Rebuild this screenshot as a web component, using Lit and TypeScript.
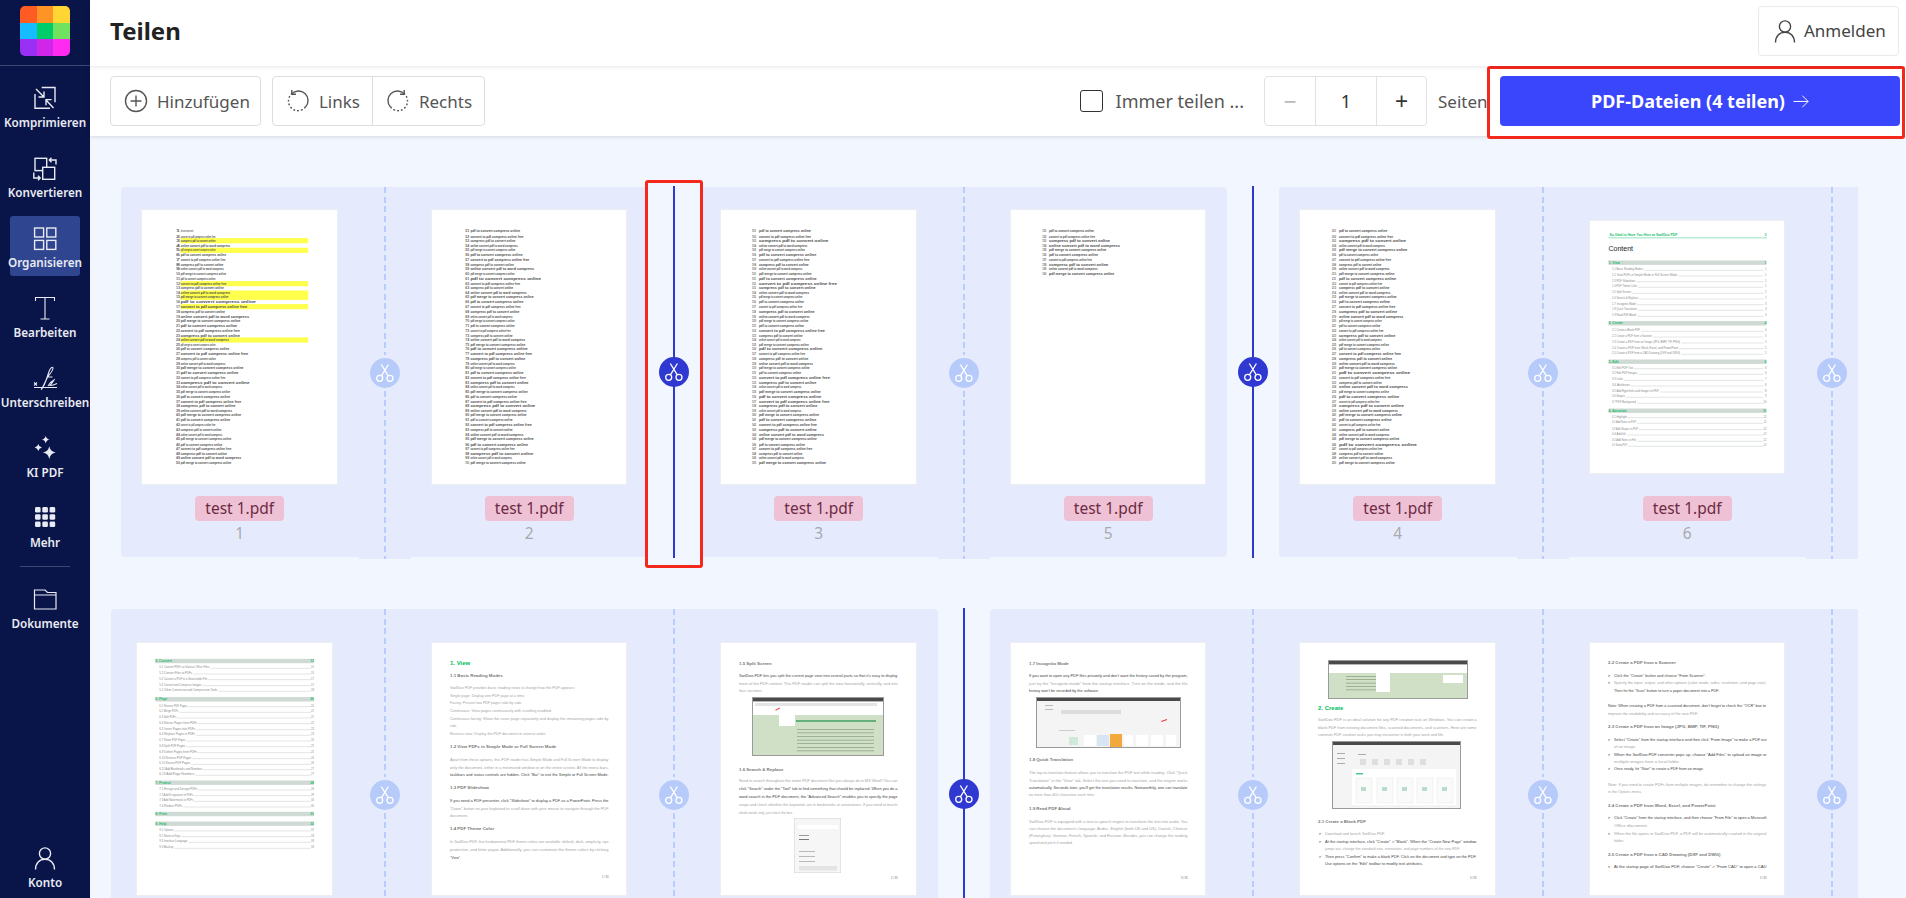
import { LitElement, css, html, svg } from 'lit';
import { customElement } from 'lit/decorators.js';

// y positions of the text rows on the "list" pages, all of them share this rhythm
const LINE_Y = [153, 169, 181, 197, 210, 225, 238, 253, 266, 282, 295, 310, 322, 338, 351, 366, 379, 394, 410, 423, 438, 451, 466, 479, 495, 507, 522, 536, 551, 564, 579, 592, 607, 621, 636, 649, 664, 677, 692, 705, 720, 733, 749, 765, 777, 793, 805, 820, 833, 849].map((y) => (y - 89) / 3);

const PHRASES = [
  'pdf to convert compress online',
  'convert to pdf compress online free',
  'compress pdf to convert online',
  'online convert pdf to word compress',
  'pdf merge to convert compress online',
];

const listPage = (numX: number, textX: number, start: number, widths: number[], marks: number[] = []) => svg`
  ${marks.map((i) => svg`<rect x="${textX}" y="${LINE_Y[i] - 2.6}" width="127.5" height="5.2" fill="#ffff4d"></rect>`)}
  ${widths.map((w, i) => svg`
    <text class="num-t" x="${numX}" y="${LINE_Y[i] + 1}" textLength="4" lengthAdjust="spacingAndGlyphs">${start + i}</text>
    <text class="line-t" x="${textX}" y="${LINE_Y[i] + 1}" textLength="${w}" lengthAdjust="spacingAndGlyphs">${PHRASES[i % PHRASES.length]}</text>`)}
`;

const ends = (list: number[], from: number, k: number) => list.map((e) => (e - from) / k);

type Toc = { y: number; label: string; page: string; head?: boolean; w?: number };

const tocPage = (rows: Toc[], x0: number, x1: number, indent: number) => svg`
  ${rows.map((r) => r.head
    ? svg`
      <rect x="${x0}" y="${r.y - 2.2}" width="${x1 - x0}" height="4.4" fill="#d0dad4"></rect>
      <text class="toc-h" x="${x0}" y="${r.y + 1.1}">${r.label}</text>
      <text class="toc-h" x="${x1}" y="${r.y + 1.1}" text-anchor="end">${r.page}</text>`
    : svg`
      <text class="toc-t" x="${x0 + indent}" y="${r.y + 1}" textLength="${r.w ?? 30}" lengthAdjust="spacingAndGlyphs">${r.label}</text>
      <line x1="${x0 + indent + (r.w ?? 30) + 1}" x2="${x1 - 3}" y1="${r.y + 1}" y2="${r.y + 1}" stroke="#c4c8c6" stroke-width="0.5"></line>
      <text class="toc-t" x="${x1}" y="${r.y + 1}" text-anchor="end">${r.page}</text>`)}
`;

const tocRows = (spec: [string, string, number, boolean?, number?][]): Toc[] =>
  spec.map(([label, page, y, head, w]) => ({ label, page, y, head, w }));

type Block = { k: 'g' | 'h' | 'p' | 'd' | 'f' | 'b'; y: number; t: string; x?: number; w?: number };

// prose pages: heading / body / dark body lines, laid out at the reference's rows
const prose = (blocks: Block[], left = 18, right = 176.5) => svg`
  ${blocks.map((b) => {
    const x = b.x ?? left;
    if (b.k === 'g') return svg`<text class="p-g" x="${x}" y="${b.y + 2}">${b.t}</text>`;
    if (b.k === 'h') return svg`<text class="p-h" x="${x}" y="${b.y + 1.6}">${b.t}</text>`;
    if (b.k === 'f') return svg`<text class="p-f" x="${right}" y="${b.y + 1}" text-anchor="end">${b.t}</text>`;
    const len = b.w ?? right - x;
    return svg`<text class="${b.k === 'd' ? 'p-d' : b.k === 'b' ? 'p-b' : 'p-p'}" x="${x}" y="${b.y + 1}" textLength="${len}" lengthAdjust="spacingAndGlyphs">${b.t}</text>`;
  })}
`;

const greenShot = (x: number, y: number, w: number, h: number, bar: number) => svg`
  <rect x="${x}" y="${y}" width="${w}" height="${h}" fill="#9a9a9a"></rect>
  <rect x="${x + 1}" y="${y + 4}" width="${w - 2}" height="${bar}" fill="#fff"></rect>
  <rect x="${x + 1}" y="${y + 1}" width="${w - 2}" height="3.4" fill="#4a4a4a"></rect>
  <rect x="${x + 1}" y="${y + 4 + bar}" width="${w - 2}" height="${h - bar - 5}" fill="#cfe0c6"></rect>
`;

const greenLines = (x: number, y: number, w: number, n: number, gap: number) => svg`
  ${Array.from({ length: n }, (_, i) => svg`<rect x="${x}" y="${y + i * gap}" width="${w}" height="0.6" fill="#7c9072"></rect>`)}
`;

const greyShot = (x: number, y: number, w: number, h: number) => svg`
  <rect x="${x}" y="${y}" width="${w}" height="${h}" fill="#9a9a9a"></rect>
  <rect x="${x + 1}" y="${y + 4}" width="${w - 2}" height="${h - 5}" fill="#f4f4f4"></rect>
  <rect x="${x + 1}" y="${y + 1}" width="${w - 2}" height="3" fill="#4a4a4a"></rect>
`;

const PAGES: Record<string, unknown> = {
  p1: listPage(34, 38.7, 1, ends([187, 243, 243, 280, 243, 270, 268, 263, 264, 270, 243, 270, 264, 280, 276, 345, 323, 267, 328, 306, 298, 305, 305, 277, 243, 278, 326, 244, 268, 314, 301, 268, 329, 260, 280, 280, 308, 294, 285, 308, 280, 243, 258, 260, 283, 260, 283, 272, 308, 283], 155, 2.529), [2, 4, 11, 13, 14, 16, 23]),
  p2: listPage(33.2, 38.4, 51, ends([1014, 1022, 1002, 1008, 1002, 1020, 1037, 998, 1049, 1000, 1067, 1014, 996, 1030, 1048, 1022, 1015, 1012, 995, 1000, 1000, 990, 995, 1027, 1027, 1033, 1044, 1027, 1000, 1003, 1022, 1028, 1035, 1000, 1033, 1006, 1030, 1052, 1030, 1030, 995, 1043, 995, 1022, 1048, 1034, 1000, 1047, 993, 1028], 888, 2.529)),
  p3: listPage(31, 38, 101, ends([336, 336, 388, 325, 318, 352, 331, 329, 310, 338, 353, 414, 350, 330, 310, 315, 310, 347, 332, 328, 315, 378, 311, 305, 329, 370, 319, 328, 342, 332, 306, 393, 352, 307, 365, 367, 392, 355, 307, 360, 352, 354, 353, 375, 353, 318, 340, 310, 315, 381], 180, 3)),
  p5: listPage(31.3, 38, 151, ends([1185, 1188, 1233, 1263, 1222, 1197, 1179, 1228, 1196, 1246], 1050, 3)),
  p4: listPage(32, 39, 201, ends([417, 430, 459, 412, 462, 397, 426, 404, 422, 433, 437, 406, 422, 424, 438, 423, 435, 439, 453, 405, 402, 409, 435, 405, 421, 401, 448, 428, 434, 439, 468, 424, 405, 463, 421, 444, 400, 454, 441, 450, 427, 402, 422, 422, 444, 483, 406, 408, 428, 434], 310, 2.221)),
  p6: svg`
    <text class="toc-h" x="19.5" y="15">So Glad to Have You Here at SwifDoo PDF</text>
    <text class="toc-h" x="176.5" y="15" text-anchor="end">3</text>
    <rect x="18.5" y="16.2" width="158.5" height="1.2" fill="#a8e6cb"></rect>
    <text class="toc-title" x="18.5" y="30">Content</text>
    ${tocPage(tocRows([
      ['1. View', '1', 41.7, true],
      ['1.1 Basic Reading Modes', '1', 48.3, false, 31], ['1.2 View PDFs in Simple Mode or Full Screen Mode', '1', 54, false, 65], ['1.3 PDF Slideshow', '1', 59.7, false, 23], ['1.4 PDF Theme Color', '1', 65.3, false, 25], ['1.5 Split Screen', '2', 71.3, false, 19], ['1.6 Search & Replace', '2', 77, false, 26], ['1.7 Incognito Mode', '3', 82.7, false, 24], ['1.8 Quick Translation', '3', 88.3, false, 25], ['1.9 Read PDF Aloud', '3', 94.3, false, 24],
      ['2. Create', '4', 102.3, true],
      ['2.1 Create a Blank PDF', '4', 109.3, false, 28], ['2.2 Create a PDF from a Scanner', '5', 115, false, 40], ['2.3 Create a PDF from an Image (JPG, BMP, TIF, PNG)', '5', 121, false, 68], ['2.4 Create a PDF from Word, Excel, and PowerPoint', '5', 126.7, false, 66], ['2.5 Create a PDF from a CAD Drawing (DXF and DWG)', '5', 132.3, false, 68],
      ['3. Edit', '6', 140.7, true],
      ['3.1 Edit PDF Text', '6', 146.7, false, 21], ['3.2 Edit PDF Images', '6', 152.3, false, 25], ['3.3 Links', '7', 158.3, false, 11], ['3.4 Attributes', '8', 164, false, 18], ['3.5 Add Hyperlinks and Images to PDF', '8', 170, false, 47], ['3.6 Shapes', '9', 175.3, false, 13], ['3.7 PDF Background', '10', 181.3, false, 24],
      ['4. Annotate', '11', 189.7, true],
      ['4.1 Highlight', '11', 195.7, false, 15], ['4.2 Add Notes to PDF', '11', 201.3, false, 24], ['4.3 Add Shapes to PDF', '12', 207.7, false, 26], ['4.4 Add Ink', '12', 213, false, 14], ['4.5 Add Notes to File', '12', 219.3, false, 24], ['4.6 Stamp PDF', '12', 224.3, false, 15],
    ]), 18.5, 176.5, 3.5)}
  `,
  toc2: tocPage(tocRows([
    ['5. Convert', '13', 18, true],
    ['5.1 Convert PDFs to Various Office Files', '15', 24.3, false, 50], ['5.2 Convert Files to PDFs', '15', 30, false, 33], ['5.3 Convert a PDF to a Searchable File', '17', 35.7, false, 48], ['5.4 Convert and Compress Images', '17', 41.7, false, 42], ['5.5 Other Conversion and Compression Tools', '18', 47.3, false, 58],
    ['6. Page', '20', 56.3, true],
    ['6.1 Reverse PDF Pages', '20', 62.7, false, 28], ['6.2 Merge PDFs', '21', 68.3, false, 19], ['6.3 Split PDFs', '21', 74, false, 17], ['6.4 Extract Pages from PDFs', '22', 79.7, false, 38], ['6.5 Insert Pages into PDFs', '23', 85.7, false, 36], ['6.6 Replace Pages in PDFs', '23', 91.3, false, 36], ['6.7 Rotate PDF Pages', '24', 97, false, 26], ['6.8 Split PDF Pages', '25', 102.7, false, 26], ['6.9 Delete Pages from PDFs', '25', 108.7, false, 38], ['6.10 Reverse PDF Pages', '26', 114.7, false, 32], ['6.11 Resize PDF Pages', '26', 120.3, false, 31], ['6.12 Add Bookmarks and Numbers', '27', 125.7, false, 43], ['6.13 Add Page Numbers', '27', 131.3, false, 35],
    ['7. Protect', '28', 139.7, true],
    ['7.1 Encrypt and Decrypt PDFs', '28', 146, false, 38], ['7.2 Add E-signature to PDFs', '29', 151.7, false, 34], ['7.3 Add Watermarks to PDFs', '30', 157.3, false, 34], ['7.4 Redact PDFs', '30', 163, false, 23],
    ['8. Print', '31', 171, true],
    ['9. Help', '32', 180.7, true],
    ['9.1 Options', '32', 187, false, 14], ['9.2 Shortcut Keys', '33', 192.7, false, 21], ['9.3 Interface Language', '33', 198.3, false, 28], ['9.4 Backup', '33', 204.3, false, 14],
  ]), 18.3, 177, 4),
  view: prose([
    { k: 'g', y: 20, t: '1. View' },
    { k: 'h', y: 32, t: '1.1 Basic Reading Modes' },
    { k: 'p', y: 45, w: 125, t: 'SwifDoo PDF provides basic reading views to change how the PDF appears:' },
    { k: 'p', y: 52.7, w: 75, t: 'Single page: Display one PDF page at a time.' },
    { k: 'p', y: 60.3, w: 72, t: 'Facing: Present two PDF pages side by side.' },
    { k: 'p', y: 68, w: 102, t: 'Continuous: View pages continuously with scrolling enabled.' },
    { k: 'p', y: 75.7, t: 'Continuous facing: Show the cover page separately and display the remaining pages side by' },
    { k: 'p', y: 83.3, w: 7, t: 'side.' },
    { k: 'p', y: 91, w: 96, t: 'Reverse view: Display the PDF document in reverse order.' },
    { k: 'h', y: 103, t: '1.2 View PDFs in Simple Mode or Full Screen Mode' },
    { k: 'p', y: 117, t: 'Apart from these options, this PDF reader has Simple Mode and Full Screen Mode to display' },
    { k: 'p', y: 124.7, t: 'only the document, either in a minimized window or on the entire screen. All the menu bars,' },
    { k: 'd', y: 132, t: 'taskbars and status controls are hidden. Click "Bar" to exit the Simple or Full Screen Mode.' },
    { k: 'h', y: 144.3, t: '1.3 PDF Slideshow' },
    { k: 'd', y: 158, t: 'If you need a PDF presenter, click "Slideshow" to display a PDF as a PowerPoint. Press the' },
    { k: 'p', y: 165.7, t: '"Down" button on your keyboard or scroll down with your mouse to navigate through the PDF' },
    { k: 'p', y: 173.3, w: 18, t: 'document.' },
    { k: 'h', y: 185.3, t: '1.4 PDF Theme Color' },
    { k: 'p', y: 199, t: 'In SwifDoo PDF, five fundamental PDF theme colors are available: default, dark, simplicity, eye' },
    { k: 'p', y: 207, t: 'protection, and letter paper. Additionally, you can customize the theme colors by clicking' },
    { k: 'd', y: 214.7, w: 11, t: '"View".' },
    { k: 'f', y: 234, t: '1 / 33' },
  ]),
  split: svg`
    ${prose([
      { k: 'h', y: 20, t: '1.5 Split Screen' },
      { k: 'd', y: 33, t: 'SwifDoo PDF lets you split the current page view into several parts so that it\'s easy to display' },
      { k: 'p', y: 41, t: 'more of the PDF content. This PDF reader can split the view horizontally, vertically, and into' },
      { k: 'p', y: 48, w: 24, t: 'four sections.' },
      { k: 'h', y: 126, t: '1.6 Search & Replace' },
      { k: 'p', y: 138, t: 'Need to search throughout the entire PDF document like you always do in MS Word? You can' },
      { k: 'd', y: 146, t: 'click "Search" under the "Tool" tab to find something that should be replaced. When you do a' },
      { k: 'd', y: 154, t: 'word search in the PDF document, the "Advanced Search" enables you to specify the page' },
      { k: 'p', y: 162, t: 'range and check whether the keywords are in bookmarks or annotations. If you need to match' },
      { k: 'p', y: 170, w: 54, t: 'whole words only, just check the box.' },
      { k: 'f', y: 235, t: '2 / 33' },
    ])}
    ${greenShot(31, 54, 132, 59, 14)}
    <rect x="34" y="60" width="122" height="3" fill="#e4e4e4"></rect>
    <rect x="58" y="69" width="16" height="14" fill="#fff"></rect>
    <rect x="54" y="66" width="5" height="1" fill="#f03030" transform="rotate(-30 56 66)"></rect>
    <rect x="75" y="77" width="80" height="2" fill="#62b07c"></rect>
    ${greenLines(76, 86, 77, 7, 3.6)}
    <rect x="73" y="175" width="47" height="55" fill="#d0d0d0"></rect>
    <rect x="73.5" y="175.5" width="46" height="54" fill="#f6f6f6"></rect>
    <rect x="77" y="182" width="40" height="4" fill="#fff"></rect>
    <rect x="78" y="192" width="10" height="1" fill="#999"></rect>
    <rect x="78" y="196" width="10" height="1" fill="#777"></rect>
    <rect x="78" y="208" width="16" height="0.8" fill="#aaa"></rect>
    <rect x="78" y="213" width="16" height="0.8" fill="#aaa"></rect>
    <rect x="78" y="218" width="16" height="0.8" fill="#aaa"></rect>
    <rect x="78" y="223" width="38" height="4.5" fill="#e4e4e4"></rect>
  `,
  incognito: svg`
    ${prose([
      { k: 'h', y: 20, t: '1.7 Incognito Mode' },
      { k: 'd', y: 33, t: 'If you want to open any PDF files privately and don\'t want the history saved by the program,' },
      { k: 'p', y: 41, t: 'just try the "Incognito mode" from the startup interface. Turn on the mode, and the file' },
      { k: 'd', y: 48, w: 70, t: 'history won\'t be recorded by the software.' },
      { k: 'h', y: 116, t: '1.8 Quick Translation' },
      { k: 'p', y: 130, t: 'The top-to-translate feature allows you to translate the PDF text while reading. Click "Quick' },
      { k: 'p', y: 138, t: 'Translation" in the "View" tab. Select the text you need to translate, and the engine works' },
      { k: 'd', y: 145, t: 'automatically. Seconds later, you\'ll get the translation results. Noteworthily, one can translate' },
      { k: 'p', y: 152, w: 66, t: 'no more than 400 characters each time.' },
      { k: 'h', y: 165, t: '1.9 Read PDF Aloud' },
      { k: 'p', y: 179, t: 'SwifDoo PDF is equipped with a text-to-speech engine to transform the text into audio. You' },
      { k: 'p', y: 186, t: 'can choose the document\'s language: Arabic, English (both UK and US), Danish, Chinese' },
      { k: 'p', y: 193, t: '(Putonghua), German, French, Spanish, and Russian. Besides, you can change the reading' },
      { k: 'p', y: 200, w: 44, t: 'speed and pitch if needed.' },
      { k: 'f', y: 235, t: '3 / 33' },
    ])}
    ${greyShot(25, 54, 145, 51)}
    <rect x="34" y="62" width="8" height="1" fill="#bbb"></rect>
    <rect x="34" y="66" width="8" height="1" fill="#bbb"></rect>
    <rect x="50" y="67" width="60" height="4" fill="#dcdcdc"></rect>
    <rect x="48" y="87" width="16" height="1" fill="#ccc"></rect>
    <rect x="58" y="94" width="9" height="8" fill="#cfead9"></rect>
    <rect x="73" y="92" width="12" height="11" fill="#fff"></rect>
    <rect x="86" y="92" width="12" height="11" fill="#d8e6f4"></rect>
    <rect x="99" y="91" width="12" height="13" fill="#f0a93a"></rect>
    <rect x="113" y="92" width="9" height="11" fill="#fff"></rect>
    <rect x="125" y="92" width="12" height="11" fill="#fff"></rect>
    <rect x="140" y="92" width="12" height="11" fill="#fff"></rect>
    <rect x="155" y="92" width="10" height="11" fill="#fff"></rect>
    <rect x="150" y="77" width="6" height="1" fill="#f03030" transform="rotate(-20 153 77)"></rect>
  `,
  create: svg`
    ${prose([
      { k: 'g', y: 65, t: '2. Create' },
      { k: 'p', y: 77, t: 'SwifDoo PDF is an ideal solution for any PDF creation task on Windows. You can create a' },
      { k: 'p', y: 85, t: 'blank PDF from existing document files, scanned documents, and scanners. Here are some' },
      { k: 'p', y: 92, w: 126, t: 'common PDF creation tasks you may encounter in both your work and life.' },
      { k: 'h', y: 178, t: '2.1 Create a Blank PDF' },
      { k: 'p', y: 191, x: 25, w: 60, t: 'Download and launch SwifDoo PDF.' },
      { k: 'd', y: 199, x: 25, t: 'At the startup interface, click "Create" > "Blank". When the "Create New Page" window' },
      { k: 'p', y: 206, x: 25, w: 135, t: 'jumps out, change the standard size, orientation, and page numbers of the new PDF.' },
      { k: 'd', y: 214, x: 25, t: 'Then press "Confirm" to make a blank PDF. Click on the document and type on the PDF.' },
      { k: 'd', y: 221, x: 25, w: 98, t: 'Use options on the "Edit" toolbar to modify text attributes.' },
      { k: 'b', y: 191, x: 19, w: 2, t: '>' },
      { k: 'b', y: 199, x: 19, w: 2, t: '>' },
      { k: 'b', y: 214, x: 19, w: 2, t: '>' },
      { k: 'f', y: 235, t: '4 / 33' },
    ])}
    ${greenShot(28, 17, 140, 39, 9)}
    <rect x="76" y="28" width="14" height="21" fill="#fff"></rect>
    <rect x="143" y="32" width="20" height="8" fill="#fff"></rect>
    ${greenLines(46, 33, 30, 5, 3.4)}
    ${greyShot(32, 98, 129, 68)}
    <rect x="58" y="111" width="8" height="1" fill="#aaa"></rect>
    <rect x="37" y="110" width="8" height="1" fill="#aaa"></rect>
    <rect x="37" y="115" width="8" height="1" fill="#aaa"></rect>
    <rect x="37" y="120" width="8" height="1" fill="#aaa"></rect>
    ${[60, 72, 84, 96, 108, 120].map((x) => svg`<rect x="${x}" y="116" width="6" height="6" fill="#dedede"></rect>`)}
    <rect x="52" y="126" width="104" height="36" fill="#fff"></rect>
    <rect x="56" y="130" width="7" height="1.5" fill="#4cc98a"></rect>
    ${[56, 77, 97, 117, 137].map((x) => svg`
      <rect x="${x}" y="135" width="16" height="25" fill="#fafafa" stroke="#e6e6e6" stroke-width="0.5"></rect>
      <rect x="${x + 5}" y="144" width="5" height="4" fill="#b9dccb"></rect>`)}
  `,
  scanner: prose([
    { k: 'h', y: 19.7, t: '2.2 Create a PDF from a Scanner' },
    { k: 'b', y: 32.7, x: 18, w: 2, t: '>' },
    { k: 'd', y: 32.7, x: 24, w: 92, t: 'Click the "Create" button and choose "From Scanner".' },
    { k: 'b', y: 40, x: 18, w: 2, t: '>' },
    { k: 'p', y: 40, x: 24, t: 'Specify the input, output, and other options (color mode, sides, resolution, and page size).' },
    { k: 'd', y: 47.7, x: 24, w: 105, t: 'Then hit the "Scan" button to turn a paper document into a PDF.' },
    { k: 'd', y: 63, w: 158, t: 'Note: When creating a PDF from a scanned document, don\'t forget to check the "OCR" box to' },
    { k: 'p', y: 70.7, w: 90, t: 'improve the readability and accuracy of the new PDF.' },
    { k: 'h', y: 83, t: '2.3 Create a PDF from an Image (JPG, BMP, TIF, PNG)' },
    { k: 'b', y: 96.7, x: 18, w: 2, t: '>' },
    { k: 'd', y: 96.7, x: 24, t: 'Select "Create" from the startup interface and then click "From Image" to make a PDF out' },
    { k: 'p', y: 104.3, x: 24, w: 22, t: 'of an image.' },
    { k: 'b', y: 112, x: 18, w: 2, t: '>' },
    { k: 'd', y: 112, x: 24, t: 'When the SwifDoo PDF converter pops up, choose "Add Files" to upload an image or' },
    { k: 'p', y: 118.7, x: 24, w: 66, t: 'multiple images from a local folder.' },
    { k: 'b', y: 126.3, x: 18, w: 2, t: '>' },
    { k: 'd', y: 126.3, x: 24, w: 90, t: 'Once ready, hit "Start" to create a PDF from an image.' },
    { k: 'p', y: 141.7, t: 'Note: If you need to create PDFs from multiple images, do remember to change the settings' },
    { k: 'p', y: 149.3, w: 34, t: 'in the Options menu.' },
    { k: 'h', y: 162.3, t: '2.4 Create a PDF from Word, Excel, and PowerPoint' },
    { k: 'b', y: 175, x: 18, w: 2, t: '>' },
    { k: 'd', y: 175, x: 24, t: 'Click "Create" from the startup interface, and then choose "From File" to open a Microsoft' },
    { k: 'p', y: 183, x: 24, w: 34, t: 'Office document.' },
    { k: 'b', y: 190.7, x: 18, w: 2, t: '>' },
    { k: 'p', y: 190.7, x: 24, t: 'When the file opens in SwifDoo PDF, a PDF will be automatically created in the original' },
    { k: 'p', y: 198.3, x: 24, w: 10, t: 'folder.' },
    { k: 'h', y: 211.3, t: '2.5 Create a PDF from a CAD Drawing (DXF and DWG)' },
    { k: 'b', y: 224, x: 18, w: 2, t: '>' },
    { k: 'd', y: 224, x: 24, t: 'At the startup page of SwifDoo PDF, choose "Create" > "From CAD" to open a CAD' },
    { k: 'f', y: 235, t: '5 / 33' },
  ]),
};

type Cell = { art: string; w: number; h: number; num: number; split?: boolean };

const ROW_ONE: Cell[] = [
  { art: 'p1', w: 195, h: 274, num: 1 },
  { art: 'p2', w: 194, h: 274, num: 2, split: true },
  { art: 'p3', w: 195, h: 274, num: 3 },
  { art: 'p5', w: 194, h: 274, num: 5, split: true },
  { art: 'p4', w: 195, h: 274, num: 4 },
  { art: 'p6', w: 194, h: 252, num: 6 },
];

const ROW_TWO: Cell[] = [
  { art: 'toc2', w: 195, h: 252, num: 7 },
  { art: 'view', w: 194, h: 252, num: 8 },
  { art: 'split', w: 195, h: 252, num: 9, split: true },
  { art: 'incognito', w: 194, h: 252, num: 10 },
  { art: 'create', w: 195, h: 252, num: 11 },
  { art: 'scanner', w: 194, h: 252, num: 12 },
];

const icon = (body: unknown) => html`<svg class="ico" viewBox="0 0 24 24" width="24" height="24" fill="none" stroke="currentColor" stroke-width="1.4">${body}</svg>`;

const star = (x: number, y: number, r: number) => {
  const k = r * 0.16;
  return `M${x} ${y - r}Q${x + k} ${y - k} ${x + r} ${y}Q${x + k} ${y + k} ${x} ${y + r}Q${x - k} ${y + k} ${x - r} ${y}Q${x - k} ${y - k} ${x} ${y - r}Z`;
};

const personPath = svg`<circle cx="12" cy="7.5" r="5.6"></circle><path d="M2.5 23.5C2.5 17 6.5 13.2 12 13.2S21.5 17 21.5 23.5"></path>`;

const NAV = [
  { label: 'Komprimieren', body: svg`<path d="M8.7 1.5H22V16.3M2 8V22.3H17M3 3l8 8M11 5.5V11H5.5M20.5 22L13 14M13 19.2V13.6H18.6"></path>` },
  { label: 'Konvertieren', body: svg`<rect x="2" y="2.3" width="11.7" height="12.3"></rect><rect x="9.7" y="11.3" width="12" height="12" fill="#091448"></rect><path d="M23 8.5V4H16.5M18.5 1.8L16.3 4L18.5 6.2M.8 16.5V22H7M5 19.8L7.2 22L5 24.2"></path>` },
  { label: 'Organisieren', active: true, body: svg`<rect x="1.6" y="2" width="9" height="9"></rect><rect x="13.8" y="2" width="9" height="9"></rect><rect x="1.6" y="14.4" width="9" height="9"></rect><rect x="13.8" y="14.4" width="9" height="9"></rect>` },
  { label: 'Bearbeiten', body: svg`<path stroke-width="1.1" d="M2.5 5V1.5H21.5V5M12 1.5V23M7.5 23H16.5"></path>` },
  { label: 'Unterschreiben', body: svg`<path stroke-width="1.1" d="M1 16.5l3 3M4 16.5l-3 3M1 21.5H24M8 23.5C12 20 14 11 16 5.5C17 2.5 19.5 0 20 2C20.5 4 17 8 14.5 11H19.5M14.5 11C13 15 10 20 8.5 23.5M15 20C17 16 19 15 21 14C20 16 18 18 17 19.5C19 19.5 22 18.5 24 17.5"></path>` },
  { label: 'KI PDF', body: svg`<path fill="currentColor" stroke="none" d="${star(16.3, 16.6, 6.4) + star(12.7, 3.6, 3.9) + star(5.3, 11.5, 3.6)}"></path>` },
  { label: 'Mehr', body: svg`${[2, 9.3, 16.6].map((x) => [1, 8.2, 15.5].map((y) => svg`<rect x="${x}" y="${y}" width="5.6" height="5.6" rx="1.4" fill="currentColor" stroke="none"></rect>`))}` },
];

const scissors = svg`<svg viewBox="0 0 30 30" width="30" height="30" fill="none" stroke="#fff" stroke-width="1.3"><circle cx="9.7" cy="20.3" r="3"></circle><circle cx="20" cy="20.3" r="3"></circle><path d="M11.3 6.5L18.3 17.8M18.4 6.5L11.4 17.8"></path></svg>`;

@customElement('app-root')
export class AppRoot extends LitElement {
  static styles = css`
    :host {
      display: flex;
      height: 100vh;
      overflow: hidden;
      background: #f2f6ff;
      font-family: 'Noto Sans', 'Open Sans', sans-serif;
      color: #555;
    }

    .side {
      flex: 0 0 90px;
      min-width: 0;
      display: flex;
      flex-direction: column;
      background: #091448;
      color: #e9ebf3;
      box-sizing: border-box;
      padding-bottom: 2px;
    }
    .logo-wrap {
      height: 66px;
      box-sizing: border-box;
      padding: 6px 20px 0;
      border-bottom: 1px solid #3b4673;
      margin-bottom: 10px;
    }
    .logo {
      width: 50px;
      height: 50px;
      display: grid;
      grid-template-columns: repeat(3, 1fr);
      border-radius: 5px;
      overflow: hidden;
    }
    .nav {
      height: 60px;
      width: 70px;
      margin: 0 10px 10px;
      box-sizing: border-box;
      padding-top: 10px;
      display: flex;
      flex-direction: column;
      align-items: center;
      border-radius: 3px;
      font-size: 11.7px;
      font-weight: 600;
      line-height: 16px;
      white-space: nowrap;
    }
    .nav.active { background: #2f4590; }
    .nav span { margin-top: 4px; }
    .nav.bottom { margin-top: auto; margin-bottom: 0; }
    .rule { height: 1px; margin: 0 20px 10px; background: #3b4673; }
    .ico { display: block; flex: none; overflow: visible; }

    .work { flex: 1; min-width: 0; display: flex; flex-direction: column; }

    .top {
      height: 66px;
      flex: none;
      box-sizing: border-box;
      display: flex;
      align-items: center;
      justify-content: space-between;
      padding: 0 7px 5px 20px;
      background: #fff;
      box-shadow: 0 1px 4px rgba(0, 0, 0, 0.1);
      position: relative;
      z-index: 2;
    }
    h1 { margin: 0; font-size: 24px; font-weight: 700; color: #222; }
    .login {
      height: 50px;
      width: 141px;
      box-sizing: border-box;
      display: flex;
      align-items: center;
      gap: 7px;
      padding-left: 14px;
      border: 1px solid #eaeaea;
      border-radius: 4px;
      font-size: 17px;
      color: #444;
    }

    .tools {
      height: 70px;
      flex: none;
      box-sizing: border-box;
      display: flex;
      align-items: center;
      padding: 0 6px 0 20px;
      background: #fff;
      box-shadow: 0 1px 4px rgba(0, 0, 0, 0.12);
      position: relative;
      z-index: 1;
      font-size: 17px;
    }
    .btn-box {
      height: 50px;
      box-sizing: border-box;
      display: flex;
      border: 1px solid #ddd;
      border-radius: 4px;
    }
    .btn {
      display: flex;
      align-items: center;
      gap: 9px;
      padding: 0 10px 0 13px;
    }
    .btn + .btn { border-left: 1px solid #ddd; }
    .turn .btn { padding-right: 12px; }
    .add { margin-right: 11px; }
    .grow { flex: 1; }
    .check {
      width: 23px;
      height: 22px;
      box-sizing: border-box;
      border: 1.5px solid #333;
      border-radius: 3px;
      margin-right: 13px;
    }
    .always { font-size: 18px; }
    .stepper {
      margin: 0 11px 0 20px;
      width: 163px;
      border-color: #e2e2e2;
    }
    .stepper div {
      display: flex;
      align-items: center;
      justify-content: center;
      font-size: 18px;
      color: #333;
    }
    .stepper div + div { border-left: 1px solid #e2e2e2; }
    .stepper .minus { width: 50px; color: #bbb; font-size: 23px; }
    .stepper .val { width: 60px; }
    .stepper .plus { flex: 1; font-size: 23px; }
    .seiten { width: 49px; overflow: hidden; white-space: nowrap; }
    .go-wrap { position: relative; margin-left: 13px; }
    .go-wrap::after {
      content: '';
      position: absolute;
      left: -13px;
      right: -5px;
      top: -10px;
      bottom: -13px;
      border: 3px solid #f5281d;
      border-radius: 3px;
      pointer-events: none;
    }
    .go {
      width: 400px;
      height: 50px;
      display: flex;
      align-items: center;
      justify-content: center;
      gap: 8px;
      background: #3a46fb;
      border-radius: 4px;
      color: #fff;
      font-size: 18px;
      font-weight: 700;
    }

    .pages { flex: 1; min-height: 0; overflow: hidden; padding-top: 51px; }
    .row { display: flex; margin: 0 0 50px 31px; }
    .row.second { margin-left: 21px; }
    .cell {
      flex: 0 0 237.5px;
      height: 370px;
      box-sizing: border-box;
      padding-top: 23px;
      display: flex;
      flex-direction: column;
      align-items: center;
      background: #e5ebfd;
    }
    .cell.wide { flex-basis: 247.5px; }
    .cell.start { border-radius: 4px 0 0 4px; }
    .cell.end { border-radius: 0 4px 4px 0; }
    .slot { height: 274px; display: flex; align-items: center; }
    .page { background: #fff; box-shadow: 0 0 0 1px #eceef2; }
    .page svg { display: block; }
    .pill {
      margin-top: 12px;
      height: 25px;
      padding: 0 10px;
      border-radius: 4px;
      background: #eec2d4;
      color: #6d2a45;
      font-size: 15.5px;
      line-height: 25px;
    }
    .num { font-size: 15.5px; line-height: 25px; color: #a9a9ad; }

    .sep {
      flex: 0 0 52px;
      height: 372px;
      position: relative;
      display: flex;
      align-items: center;
      justify-content: center;
      background: repeating-linear-gradient(#b8ccff 0 6px, transparent 6px 9.7px) no-repeat center / 2px 100%, #e5ebfd;
    }
    .sep.cut { background: linear-gradient(#2f38d0, #2f38d0) no-repeat center / 2px 100%; margin-top: -1px; }
    .snip {
      width: 30px;
      height: 30px;
      border-radius: 50%;
      background: #b7cbfb;
      box-shadow: 0 0 0 3px #e5ebfd;
    }
    .cut .snip { background: #2f38d0; box-shadow: none; }
    .snip svg { display: block; }
    .sep.marked::after {
      content: '';
      position: absolute;
      left: -3px;
      right: -3px;
      top: -6px;
      bottom: -10px;
      border: 3px solid #f5281d;
      border-radius: 3px;
    }

    text { font-family: 'Liberation Sans', Arial, sans-serif; }
    .line-t { font-size: 2.6px; font-weight: 700; fill: #4a4a4a; }
    .num-t { font-size: 2.6px; font-weight: 700; fill: #666; }
    .toc-h { font-size: 3.4px; font-weight: 700; fill: #18c06c; }
    .toc-t { font-size: 2.7px; fill: #8a8a8a; }
    .toc-title { font-size: 7px; fill: #222; }
    .p-g { font-size: 6px; font-weight: 700; fill: #00c060; }
    .p-h { font-size: 4.4px; font-weight: 700; fill: #777; }
    .p-p { font-size: 3px; fill: #a4a4a4; }
    .p-d { font-size: 3px; fill: #444; }
    .p-b { font-size: 3px; font-weight: 700; fill: #555; }
    .p-f { font-size: 2.6px; fill: #666; }
  `;

  private renderRow(cells: Cell[], second = false) {
    return html`<div class="row ${second ? 'second' : ''}">
      ${cells.map((c, i) => {
        const start = i === 0 || cells[i - 1].split;
        const cls = [start ? 'start' : '', c.split ? 'end' : '', second && i === 0 ? 'wide' : ''].join(' ');
        return html`
          <div class="cell ${cls}">
            <div class="slot">
              <div class="page" style="width:${c.w}px;height:${c.h}px">
                <svg viewBox="0 0 ${c.w} ${c.h}" width="${c.w}" height="${c.h}">${PAGES[c.art]}</svg>
              </div>
            </div>
            ${second ? '' : html`<div class="pill">test 1.pdf</div><div class="num">${c.num}</div>`}
          </div>
          <div class="sep ${c.split ? 'cut' : ''} ${c.split && !second && i === 1 ? 'marked' : ''}">
            <div class="snip">${scissors}</div>
          </div>`;
      })}
    </div>`;
  }

  render() {
    const logo = ['#ff5b22', '#ff9426', '#ffd633', '#15bcff', '#00cc6a', '#70e25f', '#9b30f5', '#cf26e8', '#ff2bf0'];
    return html`
      <aside class="side">
        <div class="logo-wrap">
          <div class="logo">${logo.map((c) => html`<i style="background:${c}"></i>`)}</div>
        </div>
        ${NAV.map((n) => html`<div class="nav ${n.active ? 'active' : ''}">${icon(n.body)}<span>${n.label}</span></div>`)}
        <div class="rule"></div>
        <div class="nav">
          ${icon(svg`<path stroke-width="1.2" d="M1.5 3H12L14.5 5.5H23V22H1.5ZM1.5 8H23"></path>`)}
          <span>Dokumente</span>
        </div>
        <div class="nav bottom">${icon(personPath)}<span>Konto</span></div>
      </aside>
      <div class="work">
        <header class="top">
          <h1>Teilen</h1>
          <div class="login">${icon(personPath)}<span>Anmelden</span></div>
        </header>
        <div class="tools">
          <div class="btn-box add">
            <div class="btn">
              ${icon(svg`<circle cx="12" cy="12" r="10.5"></circle><path d="M12 6.5v11M6.5 12h11"></path>`)}
              <span>Hinzufügen</span>
            </div>
          </div>
          <div class="btn-box turn">
            <div class="btn">
              ${icon(svg`<path d="M5.5 5A9.5 9.5 0 1 1 19.5 18"></path><path stroke-dasharray="1.8 2" d="M19.5 18A9.5 9.5 0 0 1 2.5 12.5A9.5 9.5 0 0 1 5.5 5"></path><path d="M5.8 1V5.2H10"></path>`)}
              <span>Links</span>
            </div>
            <div class="btn">
              ${icon(svg`<path d="M18.5 5A9.5 9.5 0 1 0 4.5 18"></path><path stroke-dasharray="1.8 2" d="M4.5 18A9.5 9.5 0 0 0 21.5 12.5A9.5 9.5 0 0 0 18.5 5"></path><path d="M18.2 1V5.2H14"></path>`)}
              <span>Rechts</span>
            </div>
          </div>
          <div class="grow"></div>
          <div class="check"></div>
          <span class="always">Immer teilen ...</span>
          <div class="btn-box stepper">
            <div class="minus">−</div>
            <div class="val">1</div>
            <div class="plus">+</div>
          </div>
          <div class="seiten">Seiten</div>
          <div class="go-wrap">
            <div class="go">
              <span>PDF-Dateien (4 teilen)</span>
              <svg class="ico" viewBox="0 0 18 18" width="16" height="16" fill="none" stroke="#fff" stroke-width="1.1"><path d="M0.5 9.5H17M10.5 3L17 9.5L10.5 16"></path></svg>
            </div>
          </div>
        </div>
        <main class="pages">
          ${this.renderRow(ROW_ONE)}
          ${this.renderRow(ROW_TWO, true)}
        </main>
      </div>
    `;
  }
}
